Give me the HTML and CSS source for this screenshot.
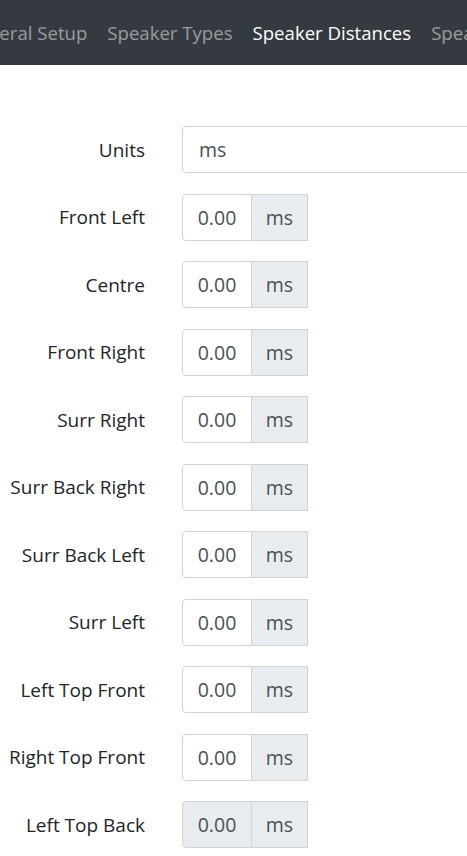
FILE: index.html
```html
<!DOCTYPE html>
<html>
<head>
<meta charset="utf-8">
<link rel="stylesheet" href="styles.css">
</head>
<body>
<nav class="topnav">
  <div class="nav-track">
    <span class="nav-link first">General Setup</span>
    <span class="nav-link">Speaker Types</span>
    <span class="nav-link active">Speaker Distances</span>
    <span class="nav-link">Speaker Levels</span>
  </div>
</nav>
<main class="form">
  <div class="row">
    <label class="lbl">Units</label>
    <div class="select">ms</div>
  </div>
  <div class="row"><label class="lbl">Front Left</label><div class="igroup"><span class="inp">0.00</span><span class="addon">ms</span></div></div>
  <div class="row"><label class="lbl">Centre</label><div class="igroup"><span class="inp">0.00</span><span class="addon">ms</span></div></div>
  <div class="row"><label class="lbl">Front Right</label><div class="igroup"><span class="inp">0.00</span><span class="addon">ms</span></div></div>
  <div class="row"><label class="lbl">Surr Right</label><div class="igroup"><span class="inp">0.00</span><span class="addon">ms</span></div></div>
  <div class="row"><label class="lbl">Surr Back Right</label><div class="igroup"><span class="inp">0.00</span><span class="addon">ms</span></div></div>
  <div class="row"><label class="lbl">Surr Back Left</label><div class="igroup"><span class="inp">0.00</span><span class="addon">ms</span></div></div>
  <div class="row"><label class="lbl">Surr Left</label><div class="igroup"><span class="inp">0.00</span><span class="addon">ms</span></div></div>
  <div class="row"><label class="lbl">Left Top Front</label><div class="igroup"><span class="inp">0.00</span><span class="addon">ms</span></div></div>
  <div class="row"><label class="lbl">Right Top Front</label><div class="igroup"><span class="inp">0.00</span><span class="addon">ms</span></div></div>
  <div class="row"><label class="lbl">Left Top Back</label><div class="igroup"><span class="inp disabled">0.00</span><span class="addon">ms</span></div></div>
</main>
</body>
</html>
```
FILE: styles.css
```css
html, body {
  margin: 0;
  padding: 0;
  overflow: hidden;
  background: #fff;
}
body {
  font-family: "Open Sans", "Noto Sans", sans-serif;
  color: #212529;
  width: 467px;
}
.topnav {
  background: #343a40;
  height: 65px;
  overflow: hidden;
  display: flex;
  align-items: center;
}
.nav-track {
  display: flex;
  white-space: nowrap;
  margin-left: -46px;
}
.nav-link {
  font-size: 18.6px;
  padding: 0 10px;
  color: rgba(255,255,255,0.5);
  line-height: 28px;
}
.nav-link.active {
  color: #fff;
}
.form {
  padding-top: 61px;
  display: flex;
  flex-direction: column;
  gap: 20.5px;
}
.row {
  display: grid;
  grid-template-columns: 145px 1fr;
  column-gap: 37px;
  align-items: center;
  height: 47px;
}
.lbl {
  text-align: right;
  font-size: 19px;
  white-space: nowrap;
}
.select {
  box-sizing: border-box;
  height: 47px;
  border: 1px solid #ced4da;
  border-radius: 4px;
  width: 320px;
  padding: 0 16px;
  font-size: 19.5px;
  color: #495057;
  display: flex;
  align-items: center;
}
.igroup {
  display: flex;
  height: 47px;
  width: 126px;
}
.inp {
  box-sizing: border-box;
  width: 70px;
  border: 1px solid #ced4da;
  border-radius: 4px 0 0 4px;
  display: flex;
  align-items: center;
  justify-content: center;
  font-size: 19.5px;
  color: #495057;
  background: #fff;
}
.inp.disabled {
  background: #e9ecef;
}
.addon {
  box-sizing: border-box;
  width: 56px;
  border: 1px solid #ced4da;
  border-left: 0;
  background: #e9ecef;
  display: flex;
  align-items: center;
  justify-content: center;
  font-size: 19.5px;
  color: #495057;
}
```
